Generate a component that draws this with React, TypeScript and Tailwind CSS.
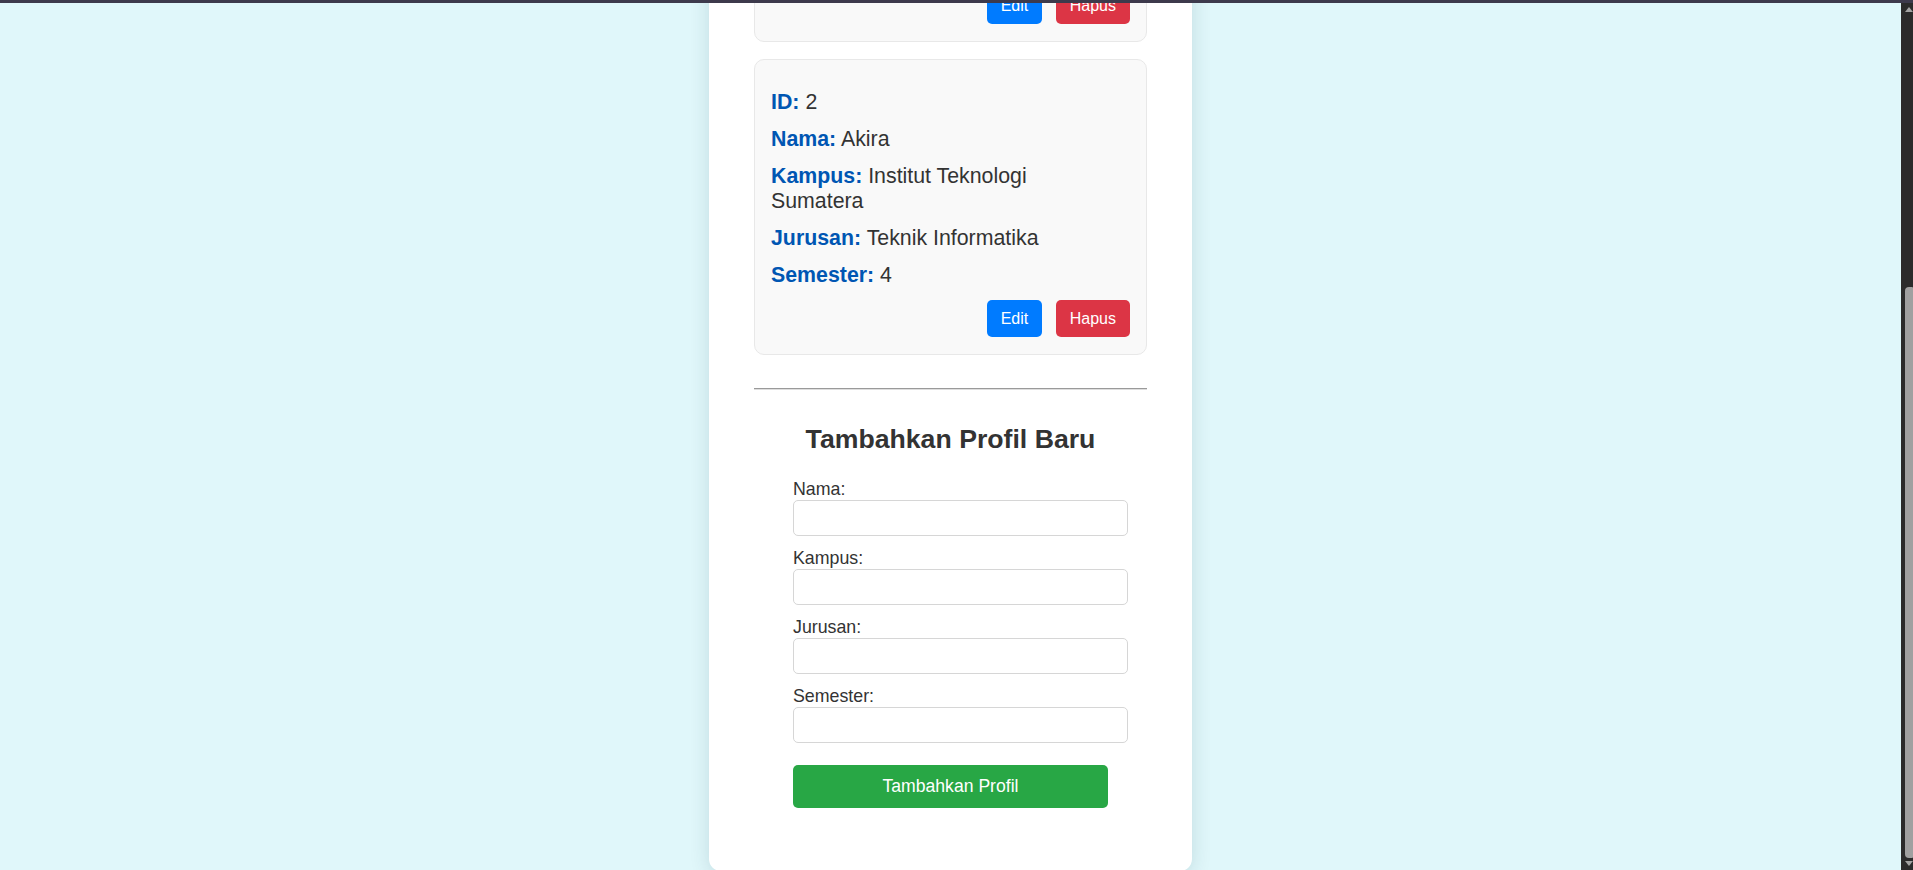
import React from "react";

type Profile = {
  id: number;
  nama: string;
  kampus: string;
  jurusan: string;
  semester: number;
};

const profiles: Profile[] = [
  { id: 1, nama: "Budi", kampus: "Institut Teknologi Sumatera", jurusan: "Teknik Informatika", semester: 4 },
  { id: 2, nama: "Akira", kampus: "Institut Teknologi Sumatera", jurusan: "Teknik Informatika", semester: 4 },
];

function Row({ label, value }: { label: string; value: React.ReactNode }) {
  return (
    <p className="mb-[12px] text-[21.33px] leading-[25px] text-[#333]">
      <strong className="font-bold text-[#0056b3]">{label}</strong> {value}
    </p>
  );
}

function ProfileCard({ p }: { p: Profile }) {
  return (
    <div className="rounded-[10px] border border-[#e8e8e8] bg-[#f9f9f9] px-[16px] pb-[17px] pt-[30px]">
      <div className="w-[340px]">
        <Row label="ID:" value={p.id} />
        <Row label="Nama:" value={p.nama} />
        <Row label="Kampus:" value={p.kampus} />
        <Row label="Jurusan:" value={p.jurusan} />
        <Row label="Semester:" value={p.semester} />
      </div>
      <div className="mt-[4px] flex justify-end gap-[14px]">
        <button className="h-[37px] rounded-[5px] bg-[#007bff] px-[13.5px] text-[16px] text-white">Edit</button>
        <button className="h-[37px] rounded-[5px] bg-[#dc3545] px-[14px] text-[16px] text-white">Hapus</button>
      </div>
    </div>
  );
}

function Field({ label, last }: { label: string; last?: boolean }) {
  return (
    <div>
      <label className="block text-[17.8px] leading-[21px] text-[#333]">{label}</label>
      <input
        type="text"
        className={`block h-[36px] w-[335px] rounded-[5px] border border-[#d6d6d6] bg-white ${last ? "" : "mb-[12px]"}`}
      />
    </div>
  );
}

export default function App() {
  return (
    <div className="relative h-[870px] w-full overflow-hidden bg-[#e0f7fa] font-['Liberation_Sans',Arial,sans-serif]">
      <div className="absolute left-0 right-0 top-0 z-20 h-[3px] bg-[#3d3a4c]" />
      <div className="absolute bottom-0 right-0 top-0 z-10 w-[12px] bg-[#2b2b2b]">
        <svg className="absolute left-[4px] top-[6px]" width="8" height="6" viewBox="0 0 8 6">
          <polygon points="0,6 8,6 4,1" fill="#a3a3a3" />
        </svg>
        <div className="absolute bottom-[12px] left-[4px] right-0 top-[287px] rounded-l-[4px] rounded-r-[1px] bg-[#a0a0a0]" />
        <svg className="absolute bottom-[3px] left-[4px]" width="8" height="6" viewBox="0 0 8 6">
          <polygon points="0,0 8,0 4,5" fill="#a3a3a3" />
        </svg>
      </div>
      <div className="flex justify-center pr-[12px]">
        <div className="mt-[-254px] w-[483px] rounded-[12px] bg-white px-[45px] pb-[63px] shadow-[0_4px_20px_rgba(0,60,70,0.14)]">
          <div className="flex flex-col gap-[17px]">
            {profiles.map((p) => (
              <ProfileCard key={p.id} p={p} />
            ))}
          </div>
          <div className="mt-[33px] border-b border-t border-b-[#dedede] border-t-[#9a9a9a]" />
          <h2 className="mt-[34px] text-center text-[26.67px] font-bold leading-[31px] text-[#333]">
            Tambahkan Profil Baru
          </h2>
          <form className="mx-auto mt-[24px] w-[315px]" onSubmit={(e) => e.preventDefault()}>
            <Field label="Nama:" />
            <Field label="Kampus:" />
            <Field label="Jurusan:" />
            <Field label="Semester:" last />
            <button
              type="submit"
              className="mt-[22px] block h-[43px] w-[315px] rounded-[5px] bg-[#28a745] text-[17.6px] text-white"
            >
              Tambahkan Profil
            </button>
          </form>
        </div>
      </div>
    </div>
  );
}
